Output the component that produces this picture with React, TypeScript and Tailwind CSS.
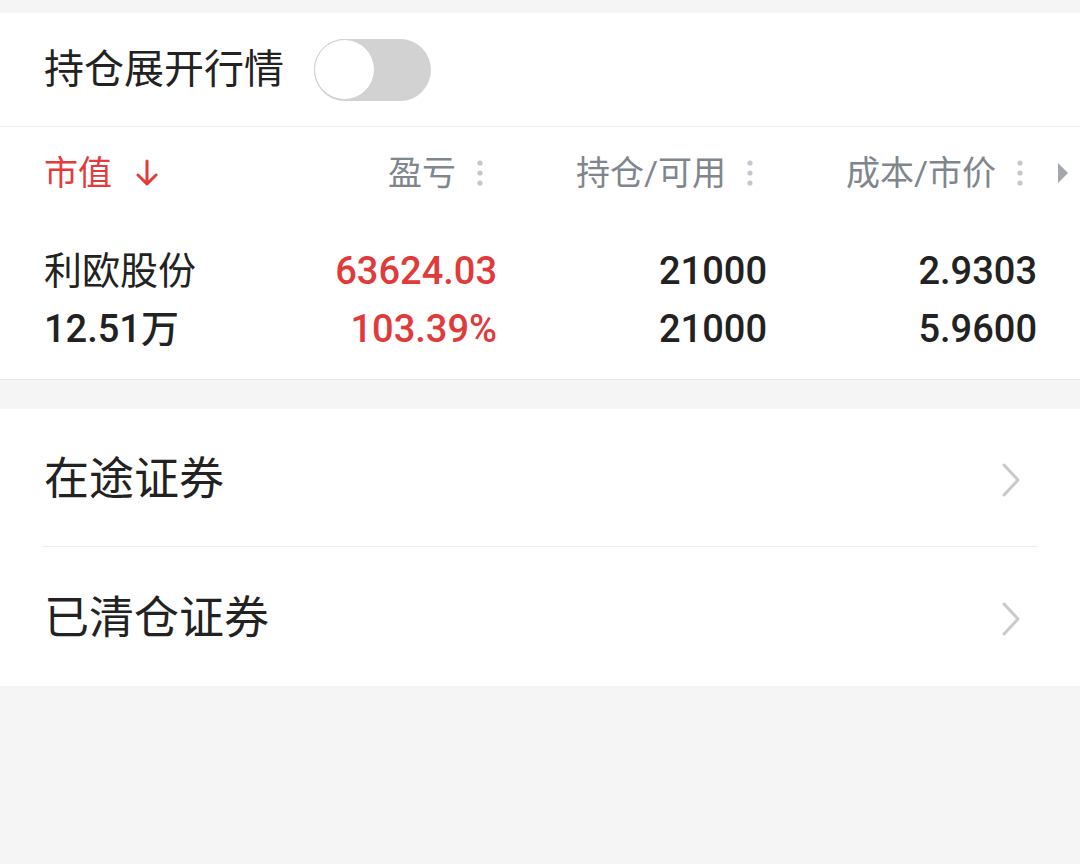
export default function App() {
  const font = { fontFamily: 'Roboto, "Noto Sans CJK SC", sans-serif' };

  const Dots = () => (
    <svg width="8" height="26" viewBox="0 0 8 26" className="ml-[20px]">
      <circle cx="4" cy="3" r="2.6" fill="#c4c7cc" />
      <circle cx="4" cy="13" r="2.6" fill="#c4c7cc" />
      <circle cx="4" cy="23" r="2.6" fill="#c4c7cc" />
    </svg>
  );

  const Chevron = () => (
    <svg width="22" height="36" viewBox="0 0 22 36">
      <path d="M4 3 L18 18 L4 33" fill="none" stroke="#cacaca" strokeWidth="3" strokeLinecap="round" strokeLinejoin="round" />
    </svg>
  );

  return (
    <div className="min-h-[864px] w-[1080px] bg-[#f5f5f5] pt-[13px]" style={font}>
      {/* toggle row */}
      <div className="flex h-[114px] items-center border-b border-[#ededed] bg-white px-[44px]">
        <span className="text-[40px] leading-none text-[#222]">持仓展开行情</span>
        <div className="ml-[30px] flex h-[62px] w-[117px] items-center rounded-full bg-[#d2d2d2]">
          <div className="h-[61px] w-[61px] rounded-full border border-[#d0d0d0] bg-white" />
        </div>
      </div>

      {/* holdings table */}
      <div className="border-b border-[#e8e8e8] bg-white pb-[21px]">
        <div className="flex h-[92px] items-center pl-[44px]">
          <div className="flex w-[183px] items-center text-[34px] leading-none text-[#e33b3b]">
            <span>市值</span>
            <svg width="22" height="28" viewBox="0 0 22 28" className="ml-[24px]">
              <path d="M11 2 V25 M2 16 L11 25 L20 16" fill="none" stroke="#e33b3b" strokeWidth="3" strokeLinecap="round" strokeLinejoin="round" />
            </svg>
          </div>
          <div className="flex w-[270px] items-center justify-end pr-[13px] text-[34px] leading-none text-[#80868d]">
            <span>盈亏</span>
            <Dots />
          </div>
          <div className="flex w-[270px] items-center justify-end pr-[13px] text-[34px] leading-none text-[#80868d]">
            <span>持仓/可用</span>
            <Dots />
          </div>
          <div className="flex w-[270px] items-center justify-end pr-[13px] text-[34px] leading-none text-[#80868d]">
            <span>成本/市价</span>
            <Dots />
          </div>
          <svg width="12" height="22" viewBox="0 0 12 22" className="ml-[20px]">
            <path d="M1 1 L11 11 L1 21 Z" fill="#a3a7ad" />
          </svg>
        </div>

        <div className="grid grid-cols-[183px_270px_270px_270px] pl-[44px] pt-[23px] text-[38px] font-medium leading-[58px] text-[#222]">
          <span className="font-normal">利欧股份</span>
          <span className="text-right text-[#e03a3a]">63624.03</span>
          <span className="text-right">21000</span>
          <span className="text-right">2.9303</span>
          <span>12.51万</span>
          <span className="text-right text-[#e03a3a]">103.39%</span>
          <span className="text-right">21000</span>
          <span className="text-right">5.9600</span>
        </div>
      </div>

      {/* securities links */}
      <div className="mt-[29px] bg-white">
        <div className="flex h-[137px] items-center justify-between pl-[44px] pr-[58px] pt-[4px]">
          <span className="text-[45px] leading-none text-[#222]">在途证券</span>
          <Chevron />
        </div>
        <div className="mx-[43px] h-px bg-[#eeeaee]" />
        <div className="flex h-[139px] items-center justify-between pl-[44px] pr-[58px] pt-[4px]">
          <span className="text-[45px] leading-none text-[#222]">已清仓证券</span>
          <Chevron />
        </div>
      </div>
    </div>
  );
}
